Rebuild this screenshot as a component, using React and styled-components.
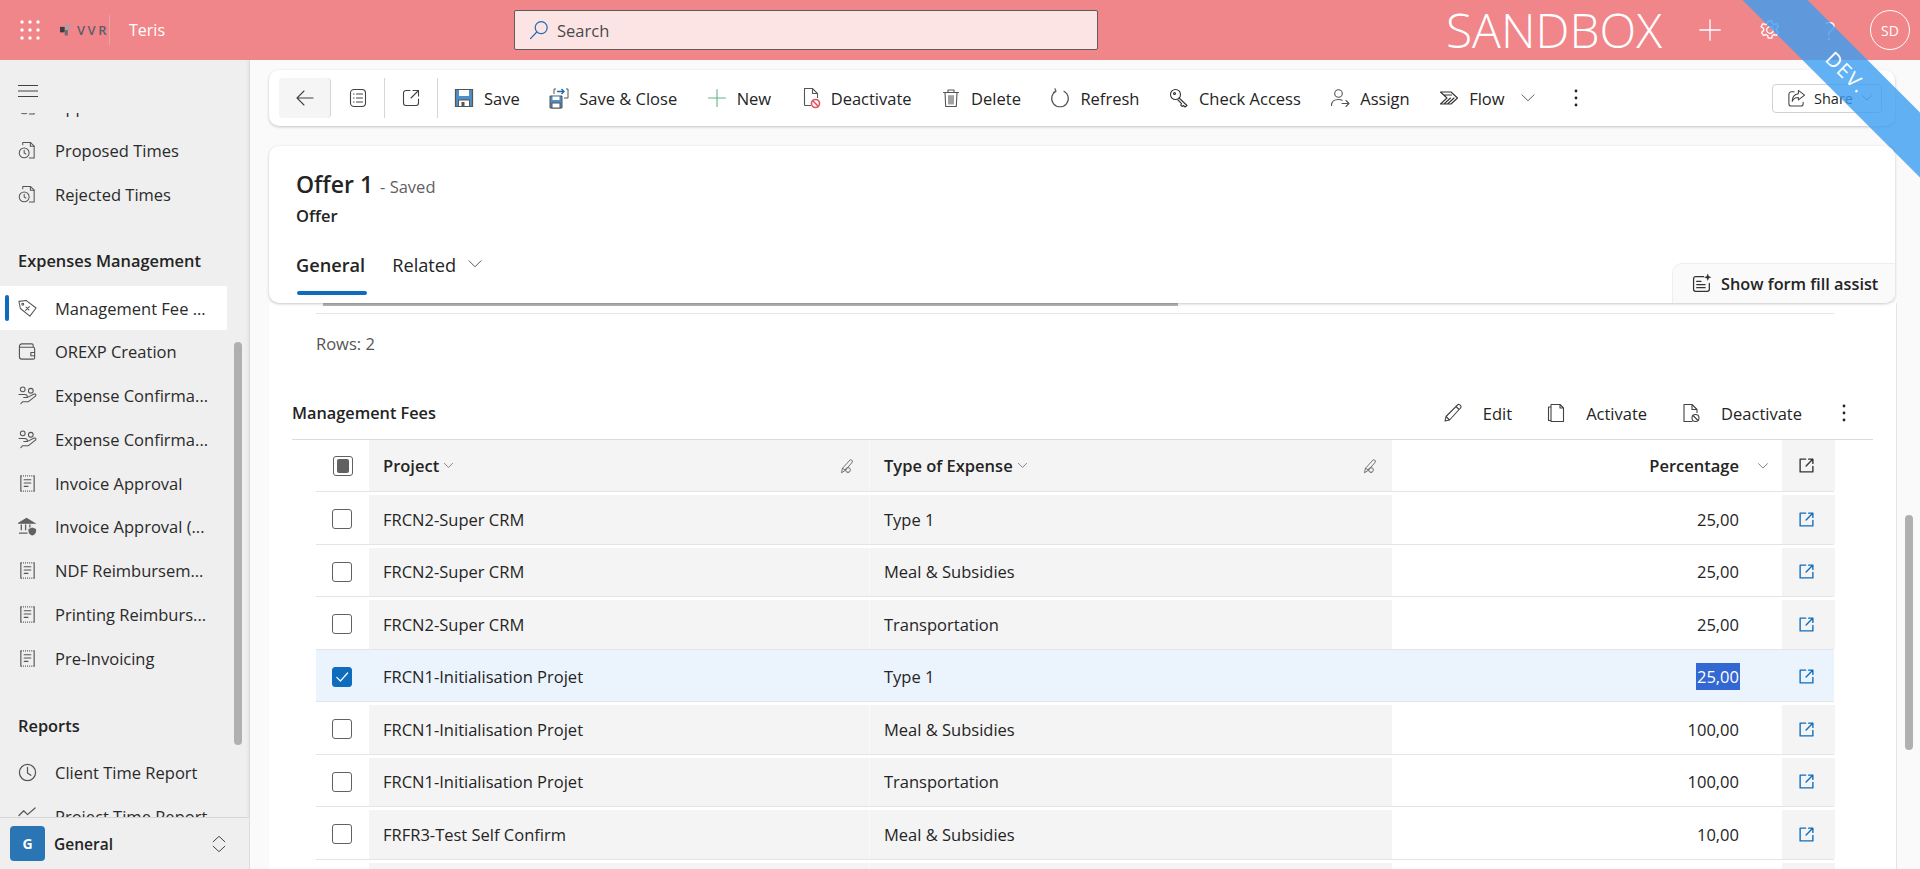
import React from 'react';
import styled, { createGlobalStyle } from 'styled-components';

const GlobalStyle = createGlobalStyle`
  html, body {
    margin: 0;
    padding: 0;
    height: 100%;
    overflow: hidden;
    font-family: "Open Sans", "Liberation Sans", sans-serif;
    color: #242424;
  }
  * { box-sizing: border-box; }
`;

const Page = styled.div`
  position: relative;
  width: 100%;
  height: 100vh;
  display: flex;
  flex-direction: column;
  overflow: hidden;
`;

/* top bar */
const TopBar = styled.header`
  height: 60px;
  flex-shrink: 0;
  display: flex;
  align-items: center;
  padding: 0 10px 0 20px;
  background: #f08689;
  color: #fff;
`;

const LogoBox = styled.div`
  margin-left: 20px;
  width: 50px;
  height: 30px;
  display: flex;
  align-items: center;
  border-right: 1px solid #e7a3a5;
`;

const LogoText = styled.span`
  margin-left: 6px;
  font-size: 13px;
  font-weight: 600;
  letter-spacing: 2.5px;
  white-space: nowrap;
  color: #5d5d6b;
`;

const AppName = styled.span`
  margin-left: 19px;
  font-size: 16px;
  width: 385px;
`;

const SearchBox = styled.div`
  width: 584px;
  height: 40px;
  display: flex;
  align-items: center;
  gap: 8px;
  padding-left: 14px;
  background: #fce3e4;
  border: 1px solid #5c5c5c;
  border-radius: 2px;
  font-size: 16.5px;
  color: #4a4a4a;
`;

const SandboxLabel = styled.span`
  margin-left: auto;
  font-size: 48px;
  font-weight: 300;
  line-height: 60px;
`;

const HeaderIcon = styled.div`
  width: 60px;
  display: flex;
  justify-content: center;
  margin-left: ${p => p.$first ? '18px' : '0'};
  font-size: 26px;
  font-weight: 300;
`;

const Avatar = styled.div`
  width: 40px;
  height: 40px;
  margin-left: 10px;
  border: 1px solid #fff;
  border-radius: 50%;
  display: flex;
  align-items: center;
  justify-content: center;
  font-size: 14px;
`;

/* ribbon */
const RibbonClip = styled.div`
  position: absolute;
  inset: 0;
  overflow: hidden;
  pointer-events: none;
`;

const Ribbon = styled.div`
  position: absolute;
  left: 1690px;
  top: 92px;
  width: 400px;
  height: 46px;
  transform: rotate(45deg);
  background: rgba(59, 158, 241, 0.8);
  color: #fff;
  display: flex;
  align-items: center;
  justify-content: center;
  padding-right: 122px;
  font-size: 20px;
  letter-spacing: 1.5px;
`;

/* sidebar */
const Body = styled.div`
  flex: 1;
  min-height: 0;
  display: flex;
`;

const Sidebar = styled.nav`
  position: relative;
  width: 250px;
  flex-shrink: 0;
  display: flex;
  flex-direction: column;
  background: #efefef;
  border-right: 1px solid #dcdcdc;
  box-shadow: inset -3px 0 3px -2px #e2e2e2;
`;

const MenuToggle = styled.div`
  height: 53px;
  flex-shrink: 0;
  padding: 20px 0 0 18px;
`;

const NavScroll = styled.div`
  flex: 1;
  min-height: 0;
  overflow: hidden;
`;

const NavList = styled.div`
  margin-top: -28px;
`;

const NavItem = styled.div`
  position: relative;
  width: 227px;
  height: 43.75px;
  display: flex;
  align-items: center;
  gap: 18px;
  padding-left: 18px;
  font-size: 16.5px;
  white-space: nowrap;
  background: ${p => p.$active ? '#fff' : 'transparent'};
  color: #2a2a2a;

  ${p => p.$active && `
    &::before {
      content: '';
      position: absolute;
      left: 5px;
      top: 9px;
      width: 4px;
      height: 26px;
      background: #0f6cbd;
      border-radius: 2px;
    }
  `}
`;

const NavHeading = styled.div`
  height: 44px;
  margin-top: ${p => p.$gap}px;
  margin-bottom: 4px;
  display: flex;
  align-items: center;
  padding-left: 18px;
  font-size: 16.4px;
  font-weight: 600;
  color: #242424;
`;

const NavThumb = styled.div`
  position: absolute;
  left: 234px;
  top: 282px;
  width: 8px;
  height: 403px;
  border-radius: 4px;
  background: #b0b0b0;
`;

const Workspace = styled.div`
  position: relative;
  z-index: 1;
  height: 52px;
  flex-shrink: 0;
  display: flex;
  align-items: center;
  padding: 0 21px 0 10px;
  background: #efefef;
  border-top: 1px solid #d6d6d6;
  font-size: 15.5px;
  font-weight: 600;
`;

const WorkspaceBadge = styled.div`
  width: 35px;
  height: 35px;
  margin-right: 9px;
  border-radius: 4px;
  background: #2a75b3;
  color: #fff;
  display: flex;
  align-items: center;
  justify-content: center;
  font-size: 14px;
  font-weight: 700;
`;

const WorkspaceToggle = styled.span`
  margin-left: auto;
  display: flex;
`;

/* main */
const Main = styled.main`
  position: relative;
  flex: 1;
  min-width: 0;
  display: flex;
  flex-direction: column;
  padding: 10px 25px 0 19px;
  background: #fafafa;
`;

const MainThumb = styled.div`
  position: absolute;
  left: 1655px;
  top: 455px;
  width: 8px;
  height: 235px;
  border-radius: 4px;
  background: #b0b0b0;
`;

const CommandBar = styled.div`
  height: 56px;
  flex-shrink: 0;
  display: flex;
  align-items: center;
  padding: 0 13px 0 10px;
  background: #fff;
  border-radius: 10px;
  box-shadow: 0 1px 3px rgba(0, 0, 0, 0.22);
`;

const BackButton = styled.div`
  width: 52px;
  height: 40px;
  display: flex;
  align-items: center;
  justify-content: center;
  background: #f5f5f5;
  border-radius: 4px;
  border-right: 1px solid #d6d6d6;
`;

const IconButton = styled.div`
  width: ${p => p.$w}px;
  height: 40px;
  display: flex;
  align-items: center;
  justify-content: center;
  border-right: 1px solid #d6d6d6;
`;

const Commands = styled.div`
  margin-left: 16px;
  display: flex;
  align-items: center;
  gap: 29.5px;
`;

const Command = styled.div`
  display: flex;
  align-items: center;
  gap: 10px;
  font-size: 16.5px;
  white-space: nowrap;
  color: #242424;
`;

const FlowChevron = styled.span`
  display: flex;
  margin-left: -14px;
`;

const OverflowDots = styled.span`
  display: flex;
  margin-left: ${p => p.$gap}px;
`;

const ShareButton = styled.div`
  margin-left: auto;
  width: 110px;
  height: 29px;
  display: flex;
  align-items: center;
  gap: 8px;
  padding-left: 14px;
  border: 1px solid #d1d1d1;
  border-radius: 4px;
  font-size: 14.5px;
  white-space: nowrap;
`;

const FormHeader = styled.section`
  position: relative;
  z-index: 2;
  height: 157px;
  margin-top: 20px;
  flex-shrink: 0;
  padding: 21px 0 0 27px;
  background: #fff;
  border-radius: 10px;
  box-shadow: 0 1px 3px rgba(0, 0, 0, 0.22);
`;

const TitleLine = styled.div`
  display: flex;
  align-items: baseline;
  gap: 7px;
  line-height: 34px;
`;

const Title = styled.h1`
  margin: 0;
  font-size: 23px;
  font-weight: 600;
  color: #242424;
`;

const SavedNote = styled.span`
  font-size: 16.5px;
  color: #616161;
`;

const EntityName = styled.div`
  margin-top: 1px;
  font-size: 16.5px;
  font-weight: 600;
  line-height: 22px;
`;

const Tabs = styled.div`
  margin-top: 23px;
  display: flex;
  gap: 27px;
`;

const Tab = styled.div`
  position: relative;
  height: 46px;
  display: flex;
  align-items: flex-start;
  gap: 11px;
  line-height: 30px;
  font-size: 18.2px;
  font-weight: ${p => p.$active ? 600 : 400};

  ${p => p.$active && `
    &::after {
      content: '';
      position: absolute;
      left: 1px;
      right: -2px;
      top: 41px;
      height: 4px;
      border-radius: 2px;
      background: #0f6cbd;
    }
  `}
`;

const TabChevron = styled.span`
  margin-top: 6px;
  display: flex;
`;

const AssistTab = styled.div`
  position: absolute;
  right: 0;
  bottom: 0;
  width: 223px;
  height: 40px;
  display: flex;
  align-items: center;
  gap: 8px;
  padding-left: 19px;
  background: #fafafa;
  border-top: 1px solid #eee;
  border-left: 1px solid #eee;
  border-radius: 10px 0 10px 0;
  font-size: 16.3px;
  font-weight: 600;
  white-space: nowrap;
`;

const FormBody = styled.section`
  flex: 1;
  min-height: 0;
  margin-right: -2px;
  padding: 0 23px;
  overflow: hidden;
  background: #fff;
  border-right: 1px solid #e4e4e4;
`;

const SubgridScroll = styled.div`
  width: 855px;
  height: 3px;
  margin-left: 31px;
  background: #b4b4b4;
`;

const RowsLine = styled.div`
  height: 59px;
  margin: 7px 39px 15px 24px;
  border-top: 1px solid #e6e6e6;
  display: flex;
  align-items: center;
  font-size: 16.5px;
  color: #555;
`;

const SectionBar = styled.div`
  height: 53px;
  display: flex;
  align-items: center;
  border-bottom: 1px solid #dcdcdc;
`;

const SectionTitle = styled.h2`
  margin: 0;
  font-size: 16.3px;
  font-weight: 600;
`;

const SectionActions = styled.div`
  margin-left: auto;
  display: flex;
  align-items: center;
  gap: 34px;
  padding-right: 27px;
`;

const SectionAction = styled.div`
  display: flex;
  align-items: center;
  gap: 20px;
  font-size: 16.5px;
  white-space: nowrap;
`;

const Table = styled.div`
  margin: 0 39px 0 24px;
`;

const Row = styled.div`
  display: grid;
  grid-template-columns: 53px 501px 522px 390px 53px;
  height: ${p => p.$head ? '52px' : '52.5px'};
  padding-top: ${p => p.$head ? '0' : '3px'};
  border-bottom: 1px solid #e4e4e4;
  font-size: 16.5px;
  background: ${p => p.$selected ? '#ebf3fc' : '#fff'};
`;

const Cell = styled.div`
  display: flex;
  align-items: center;
  justify-content: ${p => p.$align || 'flex-start'};
  padding: 0 ${p => p.$right || 14}px 0 14px;
  font-weight: ${p => p.$head ? 600 : 400};
  gap: 4px;
  white-space: nowrap;
  background: ${p => p.$shade ? '#f4f4f4' : 'transparent'};
  border-right: ${p => p.$split ? '1px solid #fafafa' : '0'};
`;

const SpacedPencil = styled.span`
  margin-left: auto;
  margin-right: -1px;
  display: flex;
`;

const SortChevron = styled.span`
  margin-left: 14px;
  display: flex;
`;

const CheckCell = styled.div`
  display: flex;
  align-items: center;
  padding-left: ${p => p.$head ? 17 : 16}px;
`;

const Box = styled.div`
  width: 20px;
  height: 20px;
  display: flex;
  align-items: center;
  justify-content: center;
  border-radius: 3px;
  border: 1px solid ${p => p.$checked ? '#0f6cbd' : '#616161'};
  background: ${p => p.$checked ? '#0f6cbd' : '#fff'};
`;

const BoxFill = styled.div`
  width: 12px;
  height: 14px;
  border-radius: 2px;
  background: #616161;
`;

const Selection = styled.span`
  padding: 2px 1px;
  margin-right: -1px;
  background: #3367d1;
  color: #fff;
`;

const LinkCell = styled.div`
  display: flex;
  align-items: center;
  justify-content: center;
  padding-right: 5px;
  background: ${p => p.$selected ? 'transparent' : '#f4f4f4'};
`;

const Svg = styled.svg`
  flex-shrink: 0;
  display: block;
  fill: none;
  stroke: ${p => p.$color || '#424242'};
  stroke-width: ${p => p.$sw || 1.1};
  stroke-linecap: round;
  stroke-linejoin: round;
`;

const Icon = ({ s = 20, color, sw, children }) => (
  <Svg width={s} height={s} viewBox="0 0 20 20" $color={color} $sw={sw}>{children}</Svg>
);

const WaffleIcon = () => (
  <svg width="20" height="20" viewBox="0 0 20 20" fill="#fff">
    {[2, 10, 18].flatMap(y => [2, 10, 18].map(x => <circle key={`${x}-${y}`} cx={x} cy={y} r="1.7" />))}
  </svg>
);

const LogoMark = () => (
  <svg width="14" height="16" viewBox="0 0 14 16">
    <rect x="0" y="4" width="6" height="7" fill="#3d3d48" />
    <rect x="7" y="1" width="6" height="6" fill="#a3a3ab" />
    <rect x="6" y="8" width="4" height="7" fill="#6d6d78" />
  </svg>
);

const SearchIcon = () => (
  <Icon s={20} color="#1c6bb5" sw={1.2}><circle cx="12.2" cy="7.6" r="6" /><path d="M7.8 12 1.5 18.6" /></Icon>
);
const PlusIcon = ({ color = '#fff', s = 24 }) => (
  <Icon s={s} color={color} sw={1.1}><path d="M10 1.5v17M1.5 10h17" /></Icon>
);
const GearIcon = () => (
  <Icon s={22} color="#fff" sw={1.2}>
    <circle cx="10" cy="10" r="3" />
    <path d="M8.4 1.8h3.2l.5 2.4 1.6.9 2.3-.8 1.6 2.8-1.8 1.6v1.8l1.8 1.6-1.6 2.8-2.3-.8-1.6.9-.5 2.4H8.4l-.5-2.4-1.6-.9-2.3.8-1.6-2.8 1.8-1.6V8.7L1.9 7.1l1.6-2.8 2.3.8 1.6-.9z" />
  </Icon>
);
const BackIcon = () => <Icon><path d="M18 10H2M9 3l-7 7 7 7" /></Icon>;
const ListIcon = () => (
  <Icon><rect x="2.5" y="1.5" width="15" height="17" rx="3.5" /><path d="M8.5 6h6M8.5 10h6M8.5 14h6M5.5 6h.6M5.5 10h.6M5.5 14h.6" /></Icon>
);
const PopOutIcon = () => (
  <Icon><path d="M9 2.5H5A2.5 2.5 0 0 0 2.5 5v10A2.5 2.5 0 0 0 5 17.5h10a2.5 2.5 0 0 0 2.5-2.5v-4M12 2.5h5.5V8M17.5 2.5 10 10" /></Icon>
);
const SaveIcon = () => (
  <svg width="20" height="20" viewBox="0 0 20 20">
    <path d="M1.5 1.5h17v17h-17z" fill="#4d8fc9" stroke="#555" strokeWidth="1.2" />
    <rect x="5" y="2" width="10" height="6" fill="#fff" />
    <rect x="4.5" y="12" width="11" height="6.5" fill="#fff" stroke="#555" />
    <rect x="7.5" y="14" width="3" height="4" fill="#555" />
  </svg>
);
const SaveCloseIcon = () => (
  <svg width="20" height="22" viewBox="0 0 20 22">
    <path d="M1 9h12v12H1z" fill="#4d8fc9" stroke="#555" />
    <rect x="3.5" y="9.5" width="7" height="3.5" fill="#fff" />
    <rect x="3" y="16" width="8" height="5" fill="#fff" stroke="#555" />
    <path d="M5 7V2h2M17 2h2v9h-4" fill="none" stroke="#555" />
    <path d="M8 4.5h7M12.5 2l2.5 2.5L12.5 7" fill="none" stroke="#1c6bb5" strokeWidth="1.4" />
  </svg>
);
const DocBase = 'M3.5 18.5V1.5h8l5 5V11M11.5 1.5v5h5M3.5 18.5H10';
const DeactivateIcon = () => (
  <svg width="20" height="22" viewBox="0 0 20 22">
    <path d={DocBase} fill="none" stroke="#555" strokeWidth="1.1" />
    <circle cx="14.5" cy="16.5" r="4" fill="#fff" stroke="#e0515b" strokeWidth="1.6" />
    <path d="m11.8 13.8 5.4 5.4" stroke="#e0515b" strokeWidth="1.6" />
  </svg>
);
const TrashIcon = () => (
  <Icon color="#555"><path d="M2.5 4.5h15M7 4.5V2h6v2.5M4 4.5l.7 14h10.6l.7-14M8 7.5v8.5M10 7.5v8.5M12 7.5v8.5" /></Icon>
);
const RefreshIcon = () => (
  <Icon color="#555" sw={1.2}><path d="M14 3.2A8.3 8.3 0 1 1 6 3.2M6 3.2 5 0.8M6 3.2 3.6 4.2" /></Icon>
);
const KeyIcon = () => (
  <Icon color="#333"><circle cx="6.5" cy="6.5" r="5" /><circle cx="5.5" cy="5.5" r="1" /><path d="m10 10 8 7.5-2 1.5-1.6-1.5-1.4 1-1.2-1.4.7-1.4L9 12" /></Icon>
);
const AssignIcon = () => (
  <Icon color="#555"><circle cx="8.5" cy="5.5" r="3.8" /><path d="M1.5 17.5c0-4 3-6 7-6 1.5 0 2.7.3 3.7.8M12 15.5h7M16 12.5l3 3-3 3" /></Icon>
);
const FlowIcon = () => (
  <Icon color="#333"><path d="M1.5 4h10.500L18.500 10l-6.500 6H1.500L8 10zM5 16l6.500-6M8.500 16l6.500-6M5.500 7h7" /></Icon>
);
const ChevronDown = ({ s = 16, color = '#424242' }) => <Icon s={s} color={color}><path d="m2.5 6 7.5 7.5L17.5 6" /></Icon>;
const VDots = () => (
  <svg width="4" height="18" viewBox="0 0 4 18" fill="#242424"><circle cx="2" cy="2" r="1.4" /><circle cx="2" cy="9" r="1.4" /><circle cx="2" cy="16" r="1.4" /></svg>
);
const ShareIcon = () => (
  <Icon s={19}><path d="M7.5 3H4.5A2.5 2.5 0 0 0 2 5.5v10A2.5 2.5 0 0 0 4.5 18h10a2.5 2.5 0 0 0 2.5-2.5V14M12 1.5l6.5 5-6.5 5V9c-3.500 0-5.500 1.500-6.500 4 0-5 2.500-7.500 6.500-8z" /></Icon>
);
const AssistIcon = () => (
  <Icon s={21} color="#333" sw={1.2}><path d="M11 3.500H3.500a2 2 0 0 0-2 2v10a2 2 0 0 0 2 2h11a2 2 0 0 0 2-2V10M4.500 8h4M4.500 11h8M4.500 14h8" /><path d="m15 .5 1 2.500 2.500 1-2.500 1-1 2.500-1-2.500-2.500-1 2.500-1z" fill="#333" stroke="none" /></Icon>
);
const PencilIcon = () => (
  <Icon><path d="m2 18 1-4.500L14.500 2a1.800 1.800 0 0 1 3 .5c.8.8.7 1.800 0 2.500L6.500 17zM3 13.500 6.500 17M13 3.500l3 3" /></Icon>
);
const CopyDocIcon = () => (
  <Icon><path d="M5 1.500h9l3.500 3.500v13.500H5zM14 1.500V5h3.500M5 4H2.500v13.500H5" /></Icon>
);
const DocBanIcon = () => (
  <Icon><path d="M11 18.500H3V1.500h8l5 5v3M11 1.500v5h5" /><circle cx="14.500" cy="15" r="3.500" /><path d="m12 12.500 5 5" /></Icon>
);
const ColumnEditIcon = () => (
  <Icon s={16} color="#616161"><path d="M2 18l1-5L12.500 2.500c1-1 3.500.5 3 2.500L7 15zM10 18a3 3 0 1 0 0-6 3 3 0 0 0 0 6zM3 13l4 2" /></Icon>
);
const OpenLink = ({ color = '#0f6cbd' }) => (
  <Icon s={17} color={color} sw={1.6}><path d="M9 2.500H2.500v15h15V11M12.500 2.500h5v5M17 3l-7.500 7.500" /></Icon>
);
const CheckMark = () => <Icon s={16} color="#fff" sw={1.5}><path d="m3.500 10.500 4.500 4.500 9-10" /></Icon>;
const DocClock = () => (
  <Icon s={19} color="#555"><path d="M5 4V1.500h8l4 4v12.500h-5" /><path d="M13 1.500v4h4" /><circle cx="6.500" cy="12.500" r="5.200" /><path d="M6.500 9.800v2.900l1.800 1" /></Icon>
);
const TagIcon = () => (
  <Icon s={19} color="#555"><path d="M1 2.500 8.500 1.500 19 9.500l-6.500 8.500L2.500 10z" /><circle cx="5" cy="5.500" r="1" /><path d="m8 12 4-4M8.500 8.500l3 3" /></Icon>
);
const WalletIcon = () => (
  <Icon s={19} color="#555" sw={1.2}><path d="M16 5V3.500a1.500 1.500 0 0 0-1.500-1.500H4A2.500 2.500 0 0 0 1.500 4.500V15.500A2.500 2.500 0 0 0 4 18h12a1.500 1.500 0 0 0 1.500-1.500V7A1.500 1.500 0 0 0 16 5.500H1.500M13.500 11h4v3.500h-4z" /></Icon>
);
const HandIcon = () => (
  <Icon s={19} color="#555"><circle cx="5" cy="3.500" r="2.500" /><circle cx="13.500" cy="5" r="2.500" /><path d="M1 9h6c2 0 3 1.500 3 3H6M10 12l7-3.500c2-.5 2.500 1.500 1 2.500l-7 5.500H5l-2 2" /></Icon>
);
const ReceiptIcon = () => (
  <Icon s={19} color="#555" sw={1.2}>
    <path d="M3 2v16M17 2v16M6.500 6h7M6.500 9.500h7M6.500 13h4" />
    <path d="M3 2h14M3 18h14" strokeDasharray="1 1.200" strokeLinecap="butt" />
  </Icon>
);
const BankIcon = () => (
  <svg width="19" height="19" viewBox="0 0 20 20" fill="none" stroke="#616161" strokeWidth="1.4">
    <path d="M1 6.500 9 1.500l8 5z" fill="#616161" />
    <path d="M3.500 8v6M8 8v6M12.500 8v3M1 17h9" />
    <path d="M15 11l4 1.500V15c0 2.500-2 4-4 4.500-2-.5-4-2-4-4.500v-2.500z" fill="#616161" stroke="none" />
  </svg>
);
const ClockIcon = () => (
  <Icon s={19} color="#555" sw={1.3}><circle cx="10" cy="10" r="8.500" /><path d="M10 4.500V10.500l3.500 2.500" /></Icon>
);
const TrendIcon = () => <Icon s={19} color="#555" sw={1.3}><path d="m1 9 5-5 4 4 8-7" /></Icon>;
const UpDown = () => <Icon s={18} color="#424242"><path d="m3.500 7.500 6.500-6 6.500 6M3.500 12.500l6.500 6 6.500-6" /></Icon>;

const navBefore = [
  { Glyph: DocClock, label: 'Approved Times' },
  { Glyph: DocClock, label: 'Proposed Times' },
  { Glyph: DocClock, label: 'Rejected Times' },
];
const navExpenses = [
  { Glyph: TagIcon, label: 'Management Fee ...', active: true },
  { Glyph: WalletIcon, label: 'OREXP Creation' },
  { Glyph: HandIcon, label: 'Expense Confirma...' },
  { Glyph: HandIcon, label: 'Expense Confirma...' },
  { Glyph: ReceiptIcon, label: 'Invoice Approval' },
  { Glyph: BankIcon, label: 'Invoice Approval (...' },
  { Glyph: ReceiptIcon, label: 'NDF Reimbursem...' },
  { Glyph: ReceiptIcon, label: 'Printing Reimburs...' },
  { Glyph: ReceiptIcon, label: 'Pre-Invoicing' },
];
const navReports = [
  { Glyph: ClockIcon, label: 'Client Time Report' },
  { Glyph: TrendIcon, label: 'Project Time Report' },
];

const commands = [
  { Glyph: SaveIcon, label: 'Save' },
  { Glyph: SaveCloseIcon, label: 'Save & Close' },
  { Glyph: () => <PlusIcon color="#5fb585" s={20} />, label: 'New' },
  { Glyph: DeactivateIcon, label: 'Deactivate' },
  { Glyph: TrashIcon, label: 'Delete' },
  { Glyph: RefreshIcon, label: 'Refresh' },
  { Glyph: KeyIcon, label: 'Check Access' },
  { Glyph: AssignIcon, label: 'Assign' },
  { Glyph: FlowIcon, label: 'Flow' },
];

const rows = [
  { project: 'FRCN2-Super CRM', type: 'Type 1', pct: '25,00' },
  { project: 'FRCN2-Super CRM', type: 'Meal & Subsidies', pct: '25,00' },
  { project: 'FRCN2-Super CRM', type: 'Transportation', pct: '25,00' },
  { project: 'FRCN1-Initialisation Projet', type: 'Type 1', pct: '25,00', selected: true },
  { project: 'FRCN1-Initialisation Projet', type: 'Meal & Subsidies', pct: '100,00' },
  { project: 'FRCN1-Initialisation Projet', type: 'Transportation', pct: '100,00' },
  { project: 'FRFR3-Test Self Confirm', type: 'Meal & Subsidies', pct: '10,00' },
];

const NavEntry = ({ item }) => (
  <NavItem $active={item.active}>
    <item.Glyph />
    {item.label}
  </NavItem>
);

export default function App() {
  return (
    <Page>
      <GlobalStyle />
      <TopBar>
        <WaffleIcon />
        <LogoBox>
          <LogoMark />
          <LogoText>VVR</LogoText>
        </LogoBox>
        <AppName>Teris</AppName>
        <SearchBox>
          <SearchIcon />
          Search
        </SearchBox>
        <SandboxLabel>SANDBOX</SandboxLabel>
        <HeaderIcon $first><PlusIcon /></HeaderIcon>
        <HeaderIcon><GearIcon /></HeaderIcon>
        <HeaderIcon>?</HeaderIcon>
        <Avatar>SD</Avatar>
      </TopBar>

      <Body>
        <Sidebar>
          <MenuToggle>
            <svg width="20" height="12" viewBox="0 0 20 12" stroke="#424242" strokeWidth="1"><path d="M0 .5h20M0 6h20M0 11.500h20" /></svg>
          </MenuToggle>
          <NavScroll>
            <NavList>
              {navBefore.map(item => <NavEntry key={item.label} item={item} />)}
              <NavHeading $gap={22}>Expenses Management</NavHeading>
              {navExpenses.map((item, i) => <NavEntry key={i} item={item} />)}
              <NavHeading $gap={23}>Reports</NavHeading>
              {navReports.map(item => <NavEntry key={item.label} item={item} />)}
            </NavList>
          </NavScroll>
          <NavThumb />
          <Workspace>
            <WorkspaceBadge>G</WorkspaceBadge>
            General
            <WorkspaceToggle><UpDown /></WorkspaceToggle>
          </Workspace>
        </Sidebar>

        <Main>
          <CommandBar>
            <BackButton><BackIcon /></BackButton>
            <IconButton $w={54}><ListIcon /></IconButton>
            <IconButton $w={53}><PopOutIcon /></IconButton>
            <Commands>
              {commands.map(c => (
                <Command key={c.label}>
                  <c.Glyph />
                  {c.label}
                </Command>
              ))}
              <FlowChevron><ChevronDown /></FlowChevron>
              <OverflowDots $gap={8}><VDots /></OverflowDots>
            </Commands>
            <ShareButton>
              <ShareIcon />
              Share
              <ChevronDown s={12} />
            </ShareButton>
          </CommandBar>

          <FormHeader>
            <TitleLine>
              <Title>Offer 1</Title>
              <SavedNote>- Saved</SavedNote>
            </TitleLine>
            <EntityName>Offer</EntityName>
            <Tabs>
              <Tab $active>General</Tab>
              <Tab>Related <TabChevron><ChevronDown /></TabChevron></Tab>
            </Tabs>
            <AssistTab>
              <AssistIcon />
              Show form fill assist
            </AssistTab>
          </FormHeader>

          <FormBody>
            <SubgridScroll />
            <RowsLine>Rows: 2</RowsLine>
            <SectionBar>
              <SectionTitle>Management Fees</SectionTitle>
              <SectionActions>
                <SectionAction><PencilIcon />Edit</SectionAction>
                <SectionAction><CopyDocIcon />Activate</SectionAction>
                <SectionAction><DocBanIcon />Deactivate</SectionAction>
                <OverflowDots $gap={6}><VDots /></OverflowDots>
              </SectionActions>
            </SectionBar>
            <Table>
              <Row $head>
                <CheckCell $head><Box><BoxFill /></Box></CheckCell>
                <Cell $head $shade $split>Project <ChevronDown s={11} /><SpacedPencil><ColumnEditIcon /></SpacedPencil></Cell>
                <Cell $head $shade>Type of Expense <ChevronDown s={11} /><SpacedPencil><ColumnEditIcon /></SpacedPencil></Cell>
                <Cell $head $align="flex-end" $right={13}>Percentage<SortChevron><ChevronDown s={12} /></SortChevron></Cell>
                <LinkCell><OpenLink color="#333" /></LinkCell>
              </Row>
              {rows.map((r, i) => (
                <Row key={i} $selected={r.selected}>
                  <CheckCell>
                    <Box $checked={r.selected}>{r.selected && <CheckMark />}</Box>
                  </CheckCell>
                  <Cell $shade={!r.selected} $split={!r.selected}>{r.project}</Cell>
                  <Cell $shade={!r.selected}>{r.type}</Cell>
                  <Cell $align="flex-end" $right={43}>
                    {r.selected ? <Selection>{r.pct}</Selection> : r.pct}
                  </Cell>
                  <LinkCell $selected={r.selected}><OpenLink /></LinkCell>
                </Row>
              ))}
              <Row>
                <CheckCell />
                <Cell $shade $split />
                <Cell $shade />
                <Cell />
                <LinkCell />
              </Row>
            </Table>
          </FormBody>
          <MainThumb />
        </Main>
      </Body>

      <RibbonClip>
        <Ribbon>DEV.</Ribbon>
      </RibbonClip>
    </Page>
  );
}
